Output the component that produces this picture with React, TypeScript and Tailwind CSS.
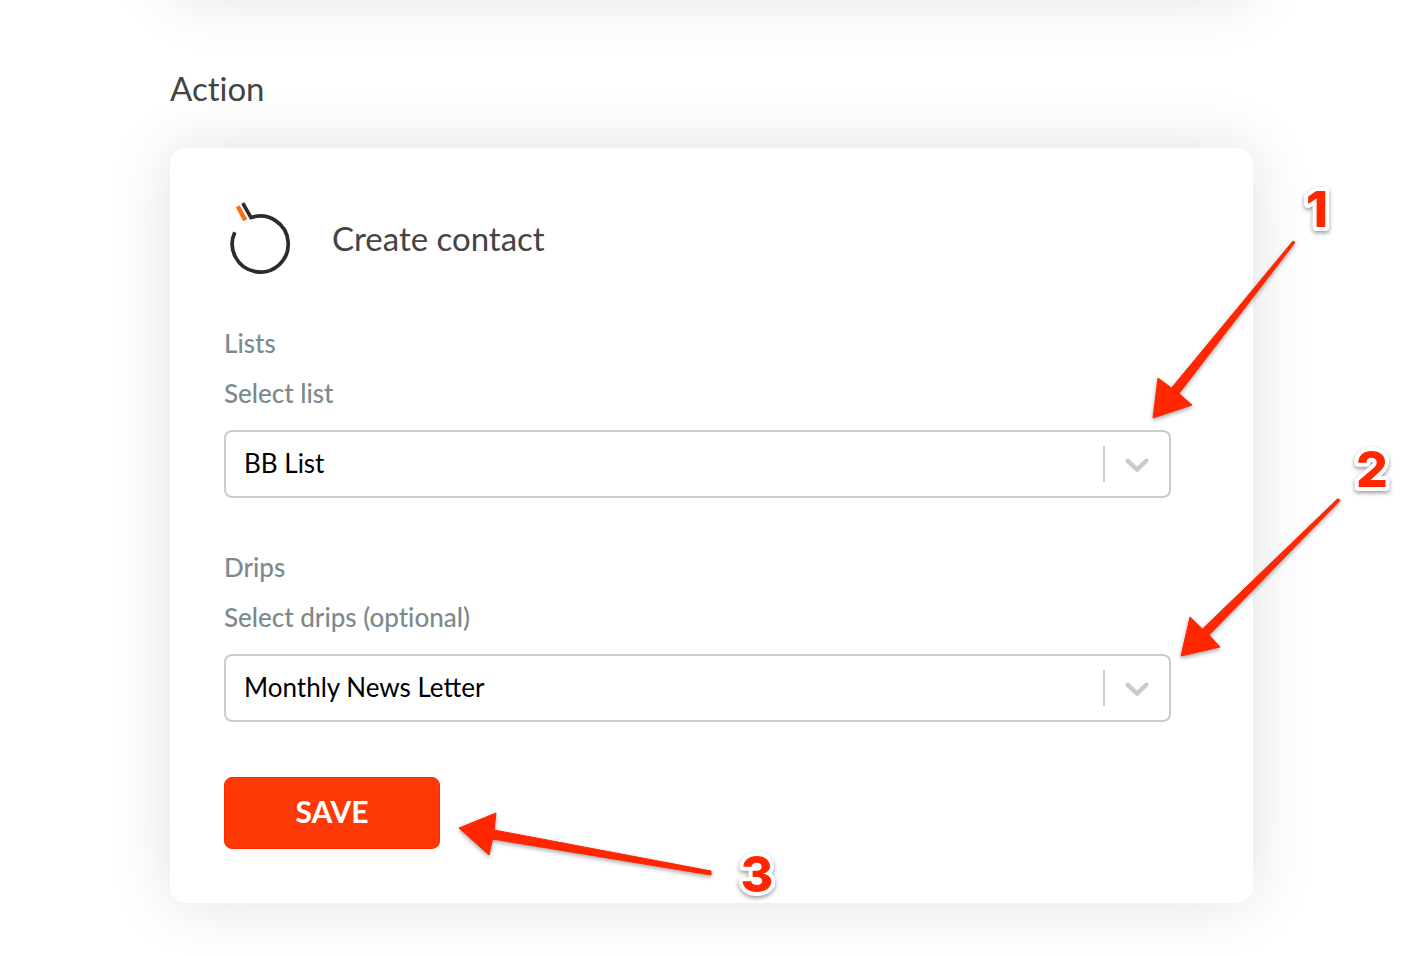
import React, { useState } from 'react';

interface SelectFieldProps {
  id: string;
  title: string;
  hint: string;
  options: string[];
  children?: React.ReactNode;
}

const SelectField: React.FC<SelectFieldProps> = ({ id, title, hint, options, children }) => {
  const [value, setValue] = useState(options[0]);

  return (
    <div className="mt-11 text-[26px] leading-[50px]">
      <h3 className="font-medium text-[#7b8a8f]">{title}</h3>
      <label htmlFor={id} className="block font-medium text-[#7b8a8f]">{hint}</label>
      <div className="relative mt-3">
        <select
          id={id}
          value={value}
          onChange={(e) => setValue(e.target.value)}
          className="block h-[68px] w-full appearance-none rounded-lg border-2 border-[#cccccc] bg-white pr-20 pb-[2px] pl-[18px] text-black [font-variant-ligatures:normal]"
        >
          {options.map((option) => (
            <option key={option}>{option}</option>
          ))}
        </select>
        <div className="pointer-events-none absolute inset-y-0 right-[14px] flex items-center gap-3">
          <span className="h-9 w-[2px] bg-[#cccccc]" />
          <svg className="h-10 w-10 fill-[#cccccc]" viewBox="0 0 20 20" aria-hidden="true">
            <path d="M4.516 7.548c0.436-0.446 1.043-0.481 1.576 0l3.908 3.747 3.908-3.747c0.533-0.481 1.141-0.446 1.574 0 0.436 0.445 0.408 1.197 0 1.615-0.406 0.418-4.695 4.502-4.695 4.502-0.217 0.223-0.502 0.335-0.787 0.335s-0.57-0.112-0.789-0.335c0 0-4.287-4.084-4.695-4.502s-0.436-1.17 0-1.615z" />
          </svg>
        </div>
        {children}
      </div>
    </div>
  );
};

const Logo: React.FC = () => (
  <svg className="h-[72px] w-[72px]" viewBox="0 0 72 72" fill="none" aria-hidden="true">
    <path d="M18.8 1.2L27 15.6A28 28 0 1 1 10.8 30.3" stroke="#282d2f" strokeWidth="3.7" />
    <path d="M13.8 4.2L21.2 18.2" stroke="#ff6a13" strokeWidth="4.4" />
  </svg>
);

interface CalloutProps {
  label: string;
  className: string;
  points: string;
  x: number;
  y: number;
}

// Numbered arrow drawn over the form
const Callout: React.FC<CalloutProps> = ({ label, className, points, x, y }) => (
  <svg className={className} aria-hidden="true">
    <polygon
      points={points}
      fill="#ff2600"
      stroke="#ff2600"
      strokeLinejoin="round"
      className="drop-shadow-[0_2px_2px_rgba(0,0,0,0.35)]"
    />
    <text
      x={x}
      y={y}
      textAnchor="middle"
      fill="#ff2600"
      stroke="#ffffff"
      strokeWidth="8"
      strokeLinejoin="round"
      paintOrder="stroke"
      className="font-['Inter',sans-serif] text-[50px] font-extrabold drop-shadow-[0_2px_2px_rgba(0,0,0,0.4)]"
    >
      {label}
    </text>
  </svg>
);

export default function App() {
  return (
    <div className="min-h-screen overflow-hidden bg-white pr-[175px] pb-[53px] pl-[170px] font-['Lato','Open_Sans',sans-serif] text-[#444444] [font-variant-ligatures:none]">
      {/* Previous card, scrolled out of view */}
      <div className="-mt-[244px] h-60 rounded-2xl shadow-[0_0_64px_rgba(0,0,0,0.12)]" />

      <h1 className="mt-[68px] mb-9 text-[33px] leading-[48px]">Action</h1>

      <section className="rounded-2xl bg-white py-[54px] pr-[82px] pl-[54px] shadow-[0_0_64px_rgba(0,0,0,0.12)]">
        <header className="flex items-center gap-9">
          <Logo />
          <h2 className="text-[33px] leading-[48px]">Create contact</h2>
        </header>

        <form onSubmit={(e) => e.preventDefault()}>
          <SelectField id="lists" title="Lists" hint="Select list" options={['BB List']}>
            <Callout
              label="1"
              className="pointer-events-none absolute -top-[260px] -right-[189px] h-[260px] w-[220px]"
              points="13,248 18,208 31.5,218 153,71 155,72.5 39,223.5 52,235"
              x={177}
              y={57}
            />
          </SelectField>
          <SelectField
            id="drips"
            title="Drips"
            hint="Select drips (optional)"
            options={['Monthly News Letter']}
          >
            <Callout
              label="2"
              className="pointer-events-none absolute -top-[224px] -right-[229px] h-[240px] w-[229px]"
              points="10,226 19,187 31.5,199 167,68.5 169,70.5 38,205 49,217"
              x={201}
              y={57}
            />
          </SelectField>

          <div className="relative mt-[55px]">
            <button
              type="submit"
              className="block h-[72px] w-[216px] rounded-lg border border-[#ff2a00] bg-[#ff3906] pb-1 text-[30px] font-bold text-white"
            >
              SAVE
            </button>
            <Callout
              label="3"
              className="pointer-events-none absolute top-[23px] left-[216px] h-[110px] w-[350px]"
              points="19,28 56,13 54,30 271,71 271,75 52.5,39 49,55"
              x={317}
              y={92}
            />
          </div>
        </form>
      </section>
    </div>
  );
}
